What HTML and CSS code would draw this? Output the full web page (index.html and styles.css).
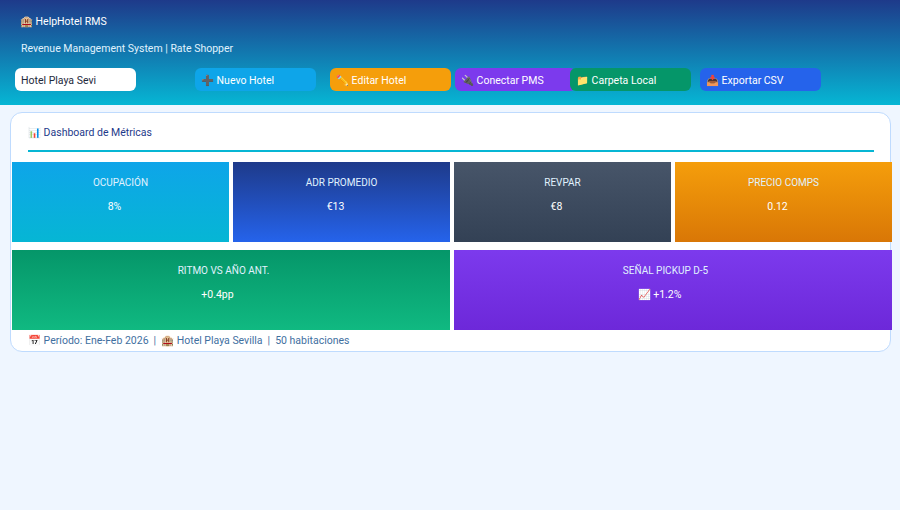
FILE: index.html
```html
<!DOCTYPE html>
<html lang="es">
<head>
<meta charset="utf-8">
<title>HelpHotel RMS</title>
<link rel="stylesheet" href="styles.css">
</head>
<body>
<header class="top">
  <div class="brand">🏨 HelpHotel RMS</div>
  <div class="tagline">Revenue Management System | Rate Shopper</div>
  <div class="toolbar">
    <input class="hotel-input" type="text" value="Hotel Playa Sevi">
    <button class="btn btn-new">➕ Nuevo Hotel</button>
    <button class="btn btn-edit">✏️ Editar Hotel</button>
    <button class="btn btn-pms">🔌 Conectar PMS</button>
    <button class="btn btn-folder">📁 Carpeta Local</button>
    <button class="btn btn-csv">📥 Exportar CSV</button>
  </div>
</header>
<main class="main">
  <section class="card">
    <div class="card-head">
      <h2 class="card-title">📊 Dashboard de Métricas</h2>
      <div class="rule"></div>
    </div>
    <div class="tiles">
      <div class="tile t-occ">
        <div class="t-label">OCUPACIÓN</div>
        <div class="t-value">8%</div>
      </div>
      <div class="tile t-adr">
        <div class="t-label">ADR PROMEDIO</div>
        <div class="t-value">€13</div>
      </div>
      <div class="tile t-rev">
        <div class="t-label">REVPAR</div>
        <div class="t-value">€8</div>
      </div>
      <div class="tile t-comp">
        <div class="t-label">PRECIO COMPS</div>
        <div class="t-value">0.12</div>
      </div>
      <div class="tile wide t-pace">
        <div class="t-label">RITMO VS AÑO ANT.</div>
        <div class="t-value">+0.4pp</div>
      </div>
      <div class="tile wide t-pick">
        <div class="t-label">SEÑAL PICKUP D-5</div>
        <div class="t-value">📈 +1.2%</div>
      </div>
    </div>
    <p class="foot">📅 Período: Ene-Feb 2026<span class="sep">|</span>🏨 Hotel Playa Sevilla<span class="sep">|</span>50 habitaciones</p>
  </section>
</main>
</body>
</html>
```

FILE: styles.css
```css
* { box-sizing: border-box; }

html, body {
  margin: 0;
  padding: 0;
}

body {
  background: #eff6ff;
  font-family: Roboto, "Liberation Sans", "DejaVu Sans", sans-serif;
  font-size: 10.5px;
  color: #1e293b;
  width: 900px;
  height: 510px;
  overflow: hidden;
}

.top {
  background: linear-gradient(180deg, #1e3a8a 0%, #06b6d4 100%);
  padding: 15px 15px 13px 15px;
  height: 105px;
  color: #fff;
}

.brand {
  font-size: 10.5px;
  line-height: 14px;
  padding-left: 5px;
  color: #ffffff;
}

.tagline {
  margin-top: 13px;
  font-size: 10.5px;
  line-height: 14px;
  padding-left: 6px;
  color: #e0f2fe;
}

.toolbar {
  margin-top: 12px;
  display: flex;
  align-items: center;
  height: 23px;
}

.hotel-input {
  width: 121px;
  height: 23px;
  border: none;
  border-radius: 6px;
  background: #ffffff;
  padding: 1px 6px 0 6px;
  font-family: inherit;
  font-size: 10.5px;
  color: #1e293b;
  outline: none;
}

.btn {
  width: 121px;
  height: 23px;
  border: none;
  border-radius: 6px;
  padding: 1px 6px 0 6px;
  text-align: left;
  font-family: inherit;
  font-size: 10.5px;
  color: #ffffff;
  cursor: pointer;
  flex: none;
}

.btn-new { background: #0ea5e9; margin-left: 59px; }
.btn-edit { background: #f59e0b; margin-left: 14px; }
.btn-pms { background: #7c3aed; margin-left: 4px; }
.btn-folder { background: #059669; margin-left: -6px; }
.btn-csv { background: #2563eb; margin-left: 9px; }

.main {
  padding: 7px 9px 0 10px;
}

.card {
  background: #ffffff;
  border: 1px solid #bfdbfe;
  border-radius: 12px;
  width: 881px;
}

.card-head {
  padding: 13px 16px 0 17px;
}

.card-title {
  margin: 0 0 10px 0;
  font-size: 10.5px;
  line-height: 14px;
  font-weight: normal;
  color: #1e3a8a;
}

.rule {
  height: 2px;
  background: #06b6d4;
  margin-bottom: 10px;
}

.tiles {
  display: grid;
  grid-template-columns: repeat(4, 217px);
  gap: 8px 4px;
  margin-left: 1px;
  width: 880px;
}

.tile {
  height: 80px;
  padding-top: 14px;
  text-align: center;
  color: #ffffff;
}

.tile.wide {
  grid-column: span 2;
  padding-right: 15px;
}

.t-label {
  font-size: 10px;
  line-height: 14px;
  color: #e0f2fe;
}

.t-value {
  margin-top: 10px;
  font-size: 10.5px;
  line-height: 14px;
  color: #ffffff;
  padding-right: 12px;
}

.t-occ { background: linear-gradient(180deg, #0ea5e9, #06b6d4); }
.t-adr { background: linear-gradient(180deg, #1e3a8a, #2563eb); }
.t-rev { background: linear-gradient(180deg, #475569, #334155); }
.t-comp { background: linear-gradient(180deg, #f59e0b, #d97706); }
.t-pace { background: linear-gradient(180deg, #059669, #10b981); }
.t-pick { background: linear-gradient(180deg, #7c3aed, #6d28d9); }

.foot {
  margin: 0;
  padding: 4px 17px 3px 17px;
  font-size: 10.5px;
  line-height: 14px;
  color: #3f6f9f;
}

.sep {
  padding: 0 5px;
}
```
